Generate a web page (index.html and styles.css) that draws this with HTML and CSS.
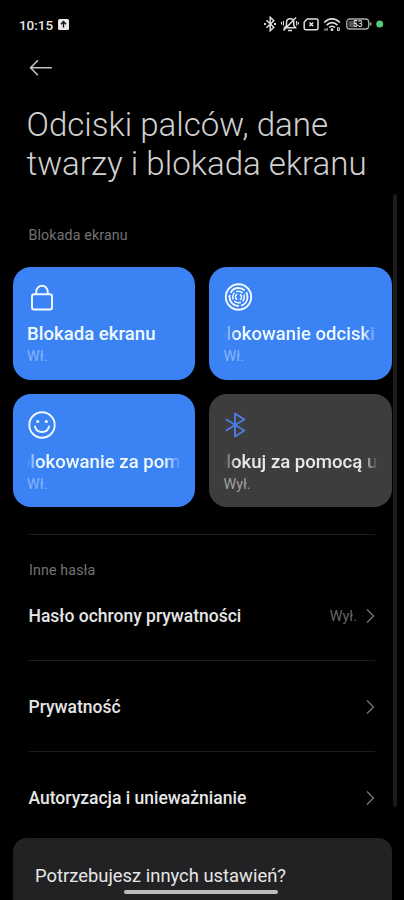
FILE: index.html
```html
<!DOCTYPE html>
<html lang="pl">
<head>
<meta charset="utf-8">
<title>Odciski palców, dane twarzy i blokada ekranu</title>
<link rel="stylesheet" href="styles.css">
</head>
<body>
<div class="screen">
  <header class="status">
    <span class="clock">10:15</span>
    <svg class="upload" width="11" height="11" viewBox="0 0 11 11"><rect width="11" height="11" rx="1.5" fill="#e8e8e8"/><path d="M5.5 8.6V3M3 5.2l2.5-2.6L8 5.2" fill="none" stroke="#111" stroke-width="1.4"/></svg>
    <svg class="tray" width="124" height="18" viewBox="0 0 124 18" fill="none" stroke="#dedede" stroke-width="1.5">
      <path d="M3.500 5.300l7.300 6.900-3.600 3.600V2.200l3.600 3.600-7.300 6.900"/>
      <path d="M1 9h1.800M11 9h2" stroke-width="1.9"/>
      <path d="M21.500 12.800h11l-1.700-2.400V7.500c0-5-7.300-5-7.300 0v2.900L21.500 12.800zM25 15.500h4M20.500 15.500L33 2.500"/>
      <path d="M20.500 6v4.500M33.600 6v4.500M18.500 7v2.500M35.400 7v2.500" stroke-width="1.100"/>
      <path d="M44.300 3.900h9.200a1.500 1.500 0 0 1 1.500 1.500v7.800a1.500 1.500 0 0 1-1.500 1.500H42.700a1.500 1.500 0 0 1-1.500-1.500V7z"/>
      <path d="M46.500 7.500l3.600 3.600m0-3.600l-3.600 3.600" stroke-width="1.500"/>
      <path d="M61.300 7.500c4.500-4.900 11-4.900 15.500 0M63.700 10.100c3.100-3.400 7.600-3.400 10.700 0M66.200 12.600c1.700-1.800 4-1.800 5.700 0" stroke-width="1.700"/>
      <circle cx="69" cy="14.700" r="1.400" fill="#dedede" stroke="none"/>
      <path d="M62 13.500v2.300M64.100 13v2.800M74.500 12.800h1.800v2.700h-1.800z" stroke-width="1"/>
      <rect x="83.700" y="4" width="22" height="10" rx="3" stroke="#aaa" stroke-width="1.300"/>
      <rect x="85.500" y="5.700" width="8.500" height="6.600" rx="1.500" fill="#555" stroke="none"/>
      <path d="M107.500 7.500v3" stroke="#aaa" stroke-width="1.600"/>
      <text class="charge" x="94.800" y="12.300" text-anchor="middle">53</text>
      <circle cx="116.700" cy="9" r="3.500" fill="#5ac878" stroke="none"/>
    </svg>
  </header>
  <nav class="toolbar">
    <svg width="24" height="18" viewBox="0 0 24 18" fill="none" stroke="#c4c4c4" stroke-width="1.600" stroke-linecap="round" stroke-linejoin="round"><path d="M22.300 8.700H1.500M8.500 1.700L1.500 8.700l7 7"/></svg>
  </nav>
  <h1 class="title">Odciski palców, dane<br>twarzy i blokada ekranu</h1>
  <h2 class="section">Blokada ekranu</h2>
  <main class="tiles">
    <section class="tile">
      <svg class="icon" width="30" height="30" viewBox="0 0 30 30" fill="none" stroke="#effaff" stroke-width="1.900"><rect x="5" y="12.200" width="20" height="15.300" rx="2"/><path d="M9.300 12.200V9.500a5.700 5.700 0 0 1 11.400 0v2.700"/></svg>
      <h3 class="name">Blokada ekranu</h3>
      <p class="state">Wł.</p>
    </section>
    <section class="tile">
      <svg class="icon" width="30" height="30" viewBox="0 0 30 30" fill="none" stroke="#effaff" stroke-width="1.900"><circle cx="14.500" cy="15" r="12.700"/><circle cx="14.500" cy="15" r="9" pathLength="100" stroke-dasharray="29.500 3.833" stroke-dashoffset="9"/><circle cx="14.500" cy="15" r="5.800" pathLength="100" stroke-dasharray="20 5" stroke-dashoffset="7" stroke-width="1.500"/><path d="M13.200 12.200a3.100 3.100 0 0 0 0 5.600M15.800 12.200a3.100 3.100 0 0 1 0 5.600" stroke-width="1.600"/></svg>
      <h3 class="name scrolling scan">blokowanie odciski</h3>
      <p class="state">Wł.</p>
    </section>
    <section class="tile">
      <svg class="icon" width="30" height="30" viewBox="0 0 30 30" fill="none" stroke="#effaff" stroke-width="1.900" stroke-linecap="round"><circle cx="15" cy="15" r="12.700"/><path d="M8 16.500c1.500 7.300 12.500 7.300 14 0"/><circle cx="10.700" cy="11.500" r="1.600" fill="#effaff" stroke="none"/><circle cx="19.300" cy="11.500" r="1.600" fill="#effaff" stroke="none"/></svg>
      <h3 class="name scrolling face">blokowanie za pom</h3>
      <p class="state">Wł.</p>
    </section>
    <section class="tile off">
      <svg class="icon" width="30" height="30" viewBox="0 0 30 30" fill="none" stroke="#4c7ce4" stroke-width="1.900" stroke-linejoin="round"><path d="M1.800 9.200l18.500 11.300-9.300 6V3.500l9.300 6-18.500 11.300"/></svg>
      <h3 class="name scrolling device">blokuj za pomocą u</h3>
      <p class="state">Wył.</p>
    </section>
  </main>
  <div class="others">
    <h2 class="section">Inne hasła</h2>
    <div class="row first"><span class="label">Hasło ochrony prywatności</span><span class="value">Wył.</span><svg class="chevron" width="9" height="16" viewBox="0 0 9 16"><path d="M1 1.500L7.500 8 1 14.500"/></svg></div>
    <div class="row"><span class="label">Prywatność</span><svg class="chevron" width="9" height="16" viewBox="0 0 9 16"><path d="M1 1.500L7.500 8 1 14.500"/></svg></div>
    <div class="row"><span class="label">Autoryzacja i unieważnianie</span><svg class="chevron" width="9" height="16" viewBox="0 0 9 16"><path d="M1 1.500L7.500 8 1 14.500"/></svg></div>
  </div>
  <footer class="suggest">Potrzebujesz innych ustawień?</footer>
  <div class="scrollbar"></div>
  <div class="homebar"></div>
</div>
</body>
</html>
```

FILE: styles.css
```css
* { box-sizing: border-box; }
body { margin: 0; background: #000; font-family: Roboto, sans-serif; }
h1, h2, h3, p { margin: 0; }
svg { display: block; flex: none; }
.screen { position: relative; display: flex; flex-direction: column; height: 900px; overflow: hidden; color: #e6e6e6; }
.status { display: flex; align-items: center; height: 48px; padding: 0 17px 0 19px; }
.clock { width: 35px; font-size: 13.5px; font-weight: 500; letter-spacing: -.05px; line-height: 18px; padding-top: 2px; }
.upload { margin-left: 4px; }
.tray { margin-left: auto; }
.charge { font-size: 8.500px; font-weight: 500; fill: #ddd; stroke: none; }
.toolbar { height: 40px; padding: 11px 29px; }
.title { height: 97px; padding: 17px 0 0 26.500px; font-size: 33.080px; font-weight: 300; line-height: 39px; color: #d0d0d0; white-space: nowrap; }
.section { font-size: 14.200px; font-weight: 400; line-height: 18px; letter-spacing: .15px; color: #737373; }
.title + .section { height: 81.500px; padding: 40.500px 0 0 28.500px; }
.tiles { display: grid; grid-template-columns: 182.500px 182.500px; grid-auto-rows: 113px; gap: 14px; padding-left: 12.500px; }
.tile { padding: 15px 14px 0 14.500px; border-radius: 18px; background: #3b82f5; overflow: hidden; }
.off { background: #3d3d3d; }
.tile:nth-child(n+3) { padding-top: 16px; }
.name { margin-top: 11px; font-size: 18.600px; font-weight: 500; line-height: 22px; color: #effaff; white-space: nowrap; overflow: hidden; }
.off .name { color: #e8e8e8; }
.scrolling { -webkit-mask-image: linear-gradient(90deg, transparent, #000 12px, #000 calc(100% - 16px), transparent); mask-image: linear-gradient(90deg, transparent, #000 12px, #000 calc(100% - 16px), transparent); }
.scan { text-indent: -7.500px; }
.face { text-indent: -7.200px; }
.device { text-indent: -7.700px; }
.state { font-size: 14.300px; line-height: 22px; color: #86b6f8; }
.off .state { color: #a2a2a2; }
.others { margin: 27.500px 29px 0; border-top: 1px solid #1c1c1c; }
.others .section { padding-top: 26px; }
.row { display: flex; align-items: center; height: 91px; border-top: 1px solid #1c1c1c; }
.first { height: 81px; padding-bottom: 7px; border-top: 0; }
.row + .row { padding-top: 1px; }
.label { margin-right: auto; margin-left: -.5px; font-size: 17.500px; font-weight: 500; line-height: 22px; white-space: nowrap; }
.value { margin-right: 9px; font-size: 14.400px; color: #676767; }
.chevron path { fill: none; stroke: #747474; stroke-width: 1.400; }
.suggest { flex: 1; margin: -4px 12.500px 0; padding: 25.500px 22.500px 0; border-radius: 14px 14px 0 0; background: #222224; font-size: 18.400px; line-height: 24px; }
.scrollbar { position: absolute; left: 393px; top: 194px; width: 3.500px; height: 613px; border-radius: 2px; background: #1b1b1b; }
.homebar { position: absolute; left: 124px; top: 890px; width: 154px; height: 4px; border-radius: 2px; background: #bdbdbf; }
```
